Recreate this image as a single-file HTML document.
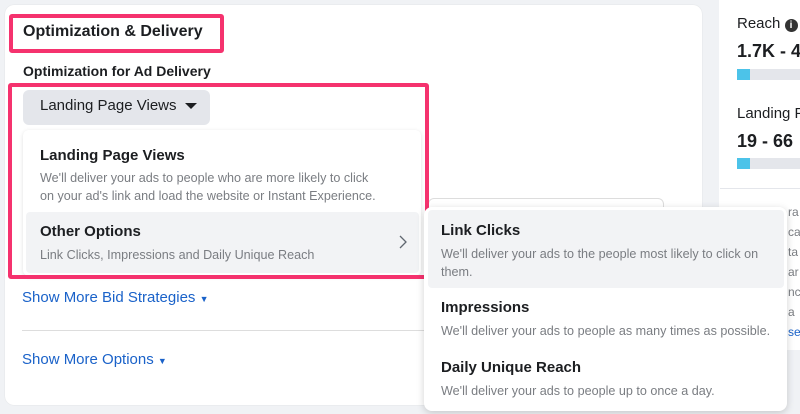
<!DOCTYPE html>
<html><head><style>
*{margin:0;padding:0;box-sizing:border-box}
body{width:800px;height:414px;background:#f0f2f5;font-family:"Liberation Sans",sans-serif;position:relative;overflow:hidden;color:#1c1e21}
.a{position:absolute}
.card{left:5px;top:5px;width:697px;height:400px;background:#fff;border-radius:9px;box-shadow:0 0 1px rgba(0,0,0,.15)}
.rc{left:719px;top:0;width:90px;height:350px;background:#fff;border-radius:0 0 0 8px}
.pink{border:4px solid #f5326e;border-radius:3px}
.t{font-weight:bold;font-size:15px;color:#1c1e21;white-space:nowrap}
.d{font-size:12.6px;color:#7a7d82;white-space:nowrap;line-height:18px}
.blue{color:#1a62c9;font-size:15px;white-space:nowrap}
</style></head><body>
<div class="a card"></div>
<div class="a rc"></div>
<div class="a" style="left:428px;top:198px;width:236px;height:20px;border:1px solid #ddd;border-radius:6px"></div>

<div class="a t" style="left:23px;top:23px;font-size:16px">Optimization &amp; Delivery</div>
<div class="a pink" style="left:9px;top:14px;width:215px;height:39px"></div>
<div class="a t" style="left:23px;top:63px;font-size:14px">Optimization for Ad Delivery</div>

<div class="a" style="left:23px;top:90px;width:187px;height:35px;background:#e4e6eb;border-radius:6px"></div>
<div class="a" style="left:40px;top:97px;font-size:15px;color:#1c1e21">Landing Page Views</div>
<div class="a" style="left:185px;top:103px;width:0;height:0;border-left:6px solid transparent;border-right:6px solid transparent;border-top:6px solid #1c1e21"></div>

<div class="a" style="left:23px;top:130px;width:398px;height:146px;background:#fff;box-shadow:0 1px 4px rgba(0,0,0,.12);border-radius:6px"></div>
<div class="a t" style="left:40px;top:147px">Landing Page Views</div>
<div class="a d" style="left:40px;top:169px">We'll deliver your ads to people who are more likely to click<br>on your ad's link and load the website or Instant Experience.</div>
<div class="a" style="left:26px;top:212px;width:393px;height:61px;background:#f2f3f5;border-radius:4px"></div>
<div class="a t" style="left:40px;top:223px">Other Options</div>
<div class="a d" style="left:40px;top:246px">Link Clicks, Impressions and Daily Unique Reach</div>
<svg class="a" style="left:397px;top:234px" width="12" height="16"><path d="M3 2 L9 8 L3 14" fill="none" stroke="#606770" stroke-width="1.3"/></svg>
<div class="a pink" style="left:8px;top:83px;width:421px;height:196px"></div>

<div class="a blue" style="left:22px;top:289px">Show More Bid Strategies <span style="font-size:9px">▼</span></div>
<div class="a" style="left:22px;top:330px;width:680px;height:1px;background:#ddd"></div>
<div class="a blue" style="left:22px;top:351px">Show More Options <span style="font-size:9px">▼</span></div>

<div class="a" style="left:737px;top:15px;font-size:15px;white-space:nowrap">Reach <span style="display:inline-block;width:13px;height:13px;border-radius:50%;background:#333;color:#fff;font-size:10px;font-weight:bold;text-align:center;line-height:13px;vertical-align:0px">i</span></div>
<div class="a" style="left:737px;top:41px;font-size:18px;font-weight:bold;white-space:nowrap">1.7K - 4</div>
<div class="a" style="left:737px;top:69px;width:70px;height:11px;background:#e4e6eb"></div>
<div class="a" style="left:737px;top:69px;width:13px;height:11px;background:#4cc3e9"></div>
<div class="a" style="left:737px;top:105px;font-size:15px;white-space:nowrap">Landing P</div>
<div class="a" style="left:737px;top:131px;font-size:18px;font-weight:bold;white-space:nowrap">19 - 66</div>
<div class="a" style="left:737px;top:158px;width:70px;height:11px;background:#e4e6eb"></div>
<div class="a" style="left:737px;top:158px;width:13px;height:11px;background:#4cc3e9"></div>
<div class="a" style="left:720px;top:188px;width:80px;height:1px;background:#e4e6eb"></div>
<div class="a d" style="left:788px;top:202px;line-height:20px;font-size:12px">ra<br>ca<br>ta<br>ar<br>nc<br>a<br><span style="color:#1a62c9">se</span></div>

<div class="a" style="left:424px;top:207px;width:363px;height:204px;background:#fff;border-radius:8px;box-shadow:0 2px 8px rgba(0,0,0,.18)"></div>
<div class="a" style="left:428px;top:210px;width:356px;height:78px;background:#f2f3f5;border-radius:4px"></div>
<div class="a t" style="left:441px;top:222px">Link Clicks</div>
<div class="a d" style="left:441px;top:245px">We'll deliver your ads to the people most likely to click on<br>them.</div>
<div class="a t" style="left:441px;top:299px">Impressions</div>
<div class="a d" style="left:441px;top:322px">We'll deliver your ads to people as many times as possible.</div>
<div class="a t" style="left:441px;top:359px">Daily Unique Reach</div>
<div class="a d" style="left:441px;top:382px">We'll deliver your ads to people up to once a day.</div>
</body></html>
